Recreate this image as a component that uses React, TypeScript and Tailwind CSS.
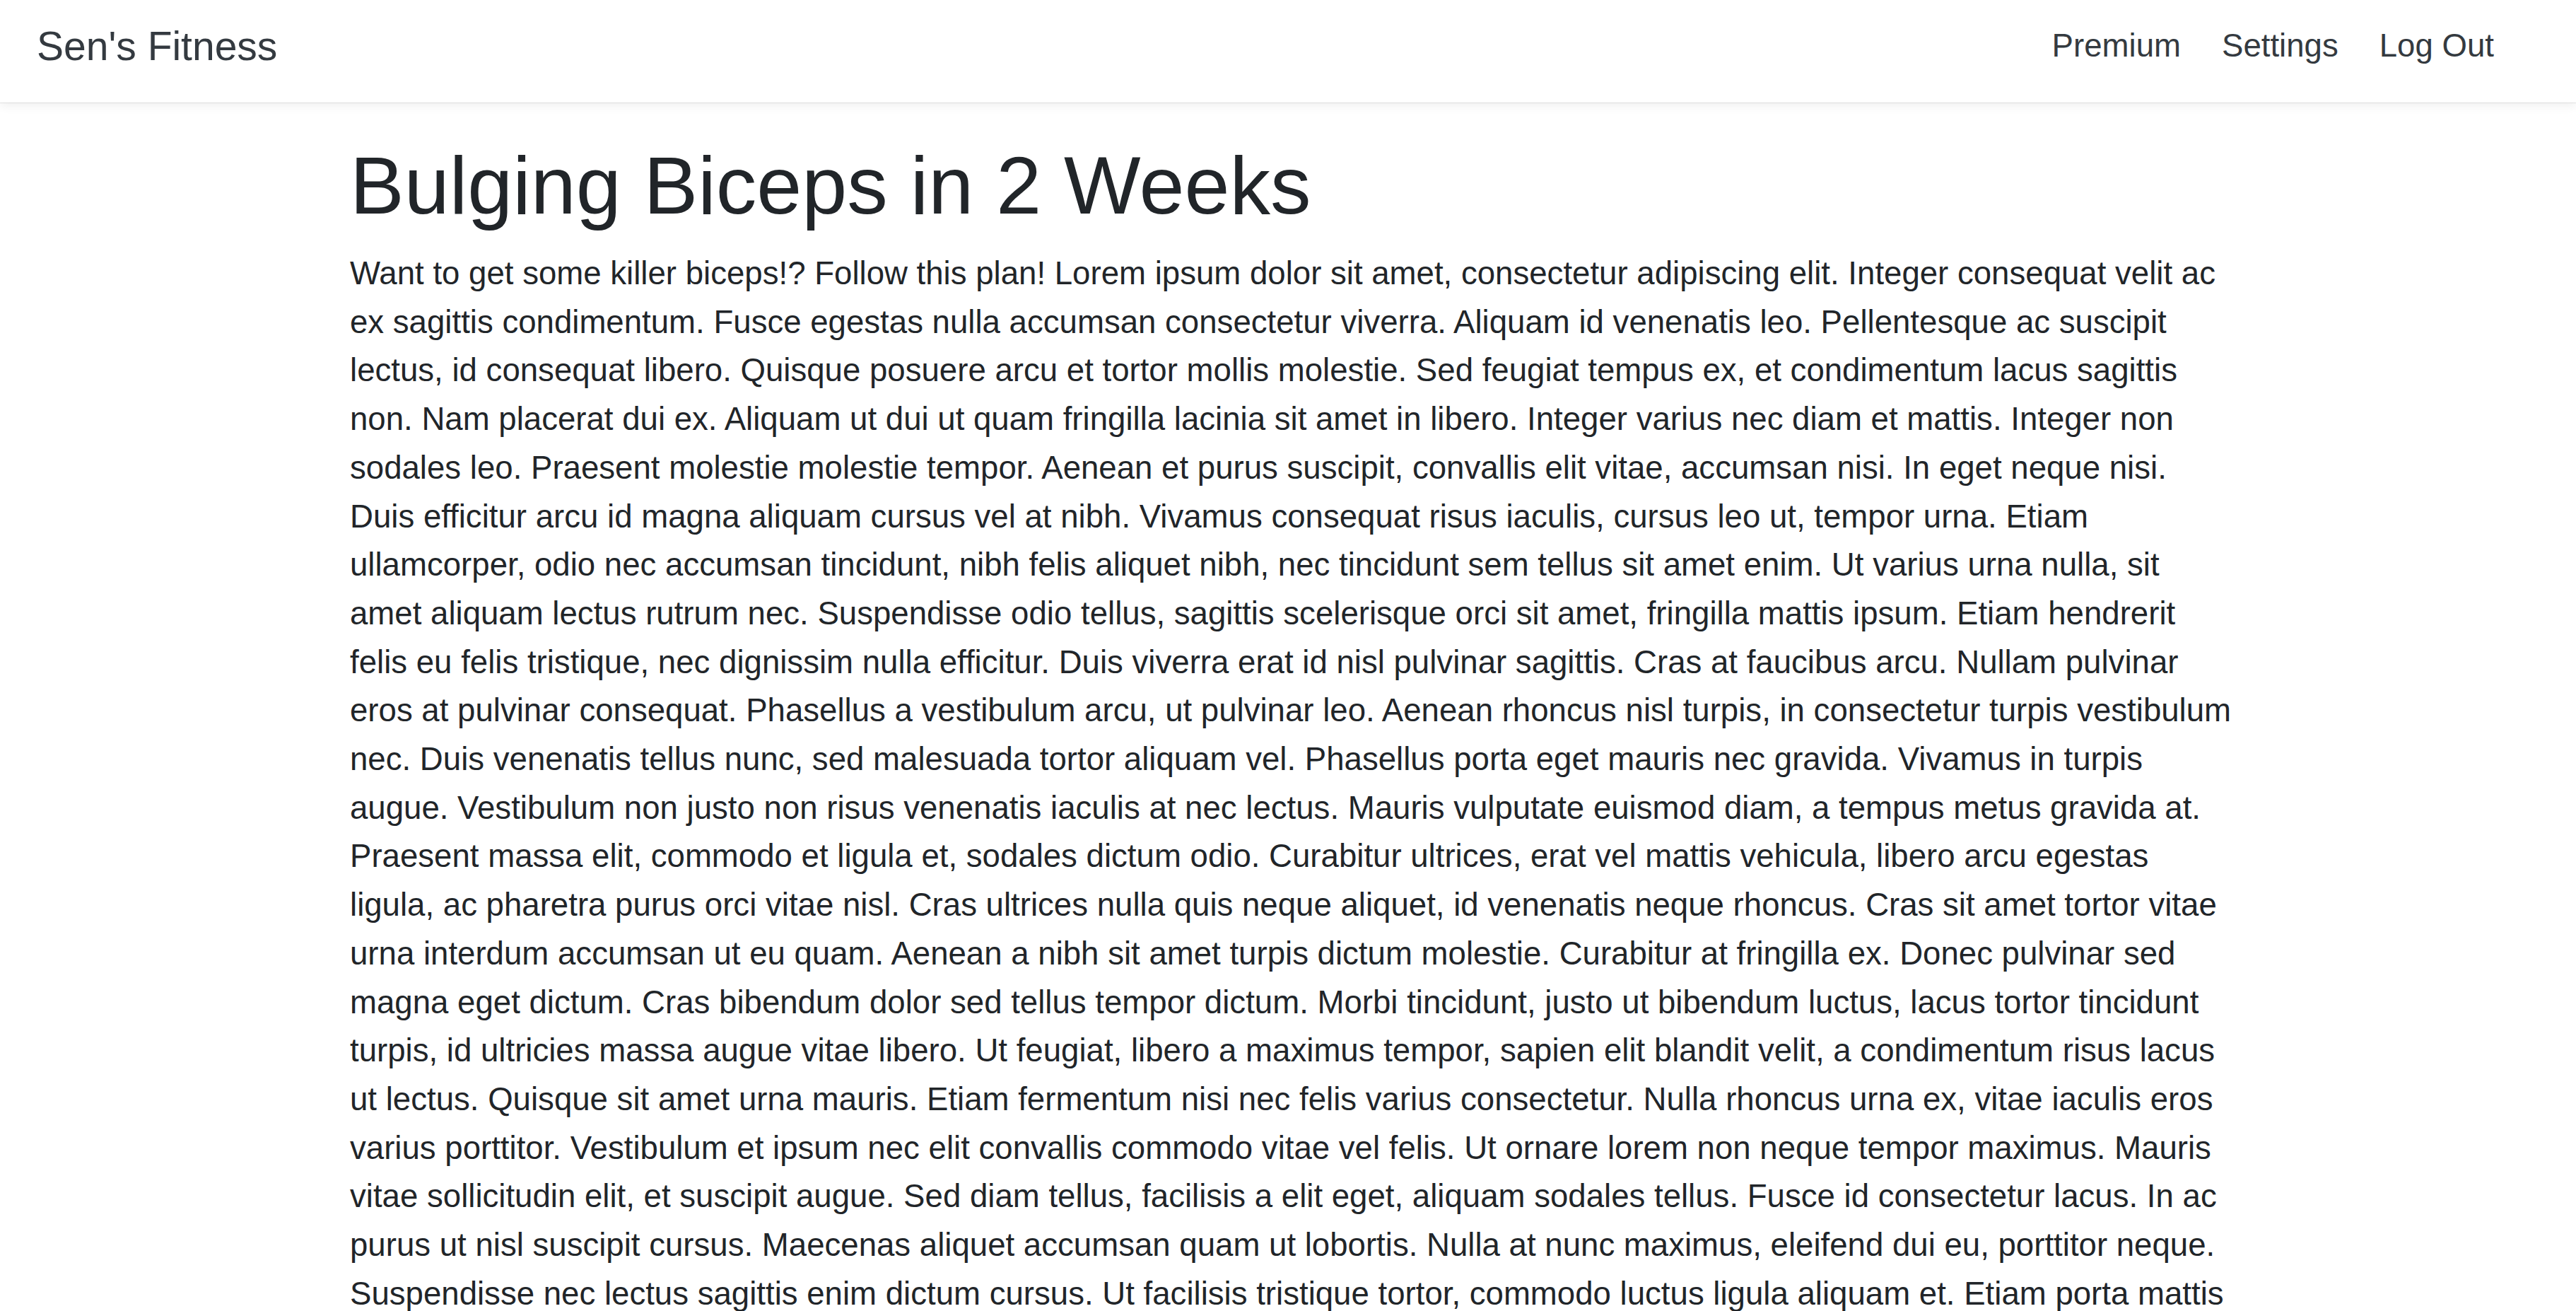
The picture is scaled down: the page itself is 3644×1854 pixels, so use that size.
import React from "react";

const TEXT =
  "Want to get some killer biceps!? Follow this plan! Lorem ipsum dolor sit amet, consectetur adipiscing elit. Integer consequat velit ac ex sagittis condimentum. Fusce egestas nulla accumsan consectetur viverra. Aliquam id venenatis leo. Pellentesque ac suscipit lectus, id consequat libero. Quisque posuere arcu et tortor mollis molestie. Sed feugiat tempus ex, et condimentum lacus sagittis non. Nam placerat dui ex. Aliquam ut dui ut quam fringilla lacinia sit amet in libero. Integer varius nec diam et mattis. Integer non sodales leo. Praesent molestie molestie tempor. Aenean et purus suscipit, convallis elit vitae, accumsan nisi. In eget neque nisi. Duis efficitur arcu id magna aliquam cursus vel at nibh. Vivamus consequat risus iaculis, cursus leo ut, tempor urna. Etiam ullamcorper, odio nec accumsan tincidunt, nibh felis aliquet nibh, nec tincidunt sem tellus sit amet enim. Ut varius urna nulla, sit amet aliquam lectus rutrum nec. Suspendisse odio tellus, sagittis scelerisque orci sit amet, fringilla mattis ipsum. Etiam hendrerit felis eu felis tristique, nec dignissim nulla efficitur. Duis viverra erat id nisl pulvinar sagittis. Cras at faucibus arcu. Nullam pulvinar eros at pulvinar consequat. Phasellus a vestibulum arcu, ut pulvinar leo. Aenean rhoncus nisl turpis, in consectetur turpis vestibulum nec. Duis venenatis tellus nunc, sed malesuada tortor aliquam vel. Phasellus porta eget mauris nec gravida. Vivamus in turpis augue. Vestibulum non justo non risus venenatis iaculis at nec lectus. Mauris vulputate euismod diam, a tempus metus gravida at. Praesent massa elit, commodo et ligula et, sodales dictum odio. Curabitur ultrices, erat vel mattis vehicula, libero arcu egestas ligula, ac pharetra purus orci vitae nisl. Cras ultrices nulla quis neque aliquet, id venenatis neque rhoncus. Cras sit amet tortor vitae urna interdum accumsan ut eu quam. Aenean a nibh sit amet turpis dictum molestie. Curabitur at fringilla ex. Donec pulvinar sed magna eget dictum. Cras bibendum dolor sed tellus tempor dictum. Morbi tincidunt, justo ut bibendum luctus, lacus tortor tincidunt turpis, id ultricies massa augue vitae libero. Ut feugiat, libero a maximus tempor, sapien elit blandit velit, a condimentum risus lacus ut lectus. Quisque sit amet urna mauris. Etiam fermentum nisi nec felis varius consectetur. Nulla rhoncus urna ex, vitae iaculis eros varius porttitor. Vestibulum et ipsum nec elit convallis commodo vitae vel felis. Ut ornare lorem non neque tempor maximus. Mauris vitae sollicitudin elit, et suscipit augue. Sed diam tellus, facilisis a elit eget, aliquam sodales tellus. Fusce id consectetur lacus. In ac purus ut nisl suscipit cursus. Maecenas aliquet accumsan quam ut lobortis. Nulla at nunc maximus, eleifend dui eu, porttitor neque. Suspendisse nec lectus sagittis enim dictum cursus. Ut facilisis tristique tortor, commodo luctus ligula aliquam et. Etiam porta mattis lorem, sed pulvinar nibh volutpat non. Nunc sed ante a tortor euismod bibendum.";

export default function App() {
  return (
    <div className="h-screen overflow-hidden bg-white font-['Liberation_Sans',Arial,sans-serif] text-[#212529]">
      <nav className="relative z-10 flex h-[145px] items-center justify-between bg-white pb-[14px] pl-[52px] pr-[116px] shadow-[0_1px_0_rgba(0,0,0,0.09),0_4px_14px_rgba(0,0,0,0.07)]">
        <a className="text-[57px] leading-[1.5] text-[#343a40]">Sen's Fitness</a>
        <ul className="flex items-center gap-[58px] text-[45.6px] leading-[1.5] text-[#343a40]">
          <li>Premium</li>
          <li>Settings</li>
          <li>Log Out</li>
        </ul>
      </nav>
      <main className="ml-[495px] w-[2662px] pt-[48px]">
        <h1 className="mb-[22px] text-[115px] leading-[1.2] font-normal">
          Bulging Biceps in 2 Weeks
        </h1>
        <p className="text-[45.6px] leading-[68.7px]">{TEXT}</p>
      </main>
    </div>
  );
}
